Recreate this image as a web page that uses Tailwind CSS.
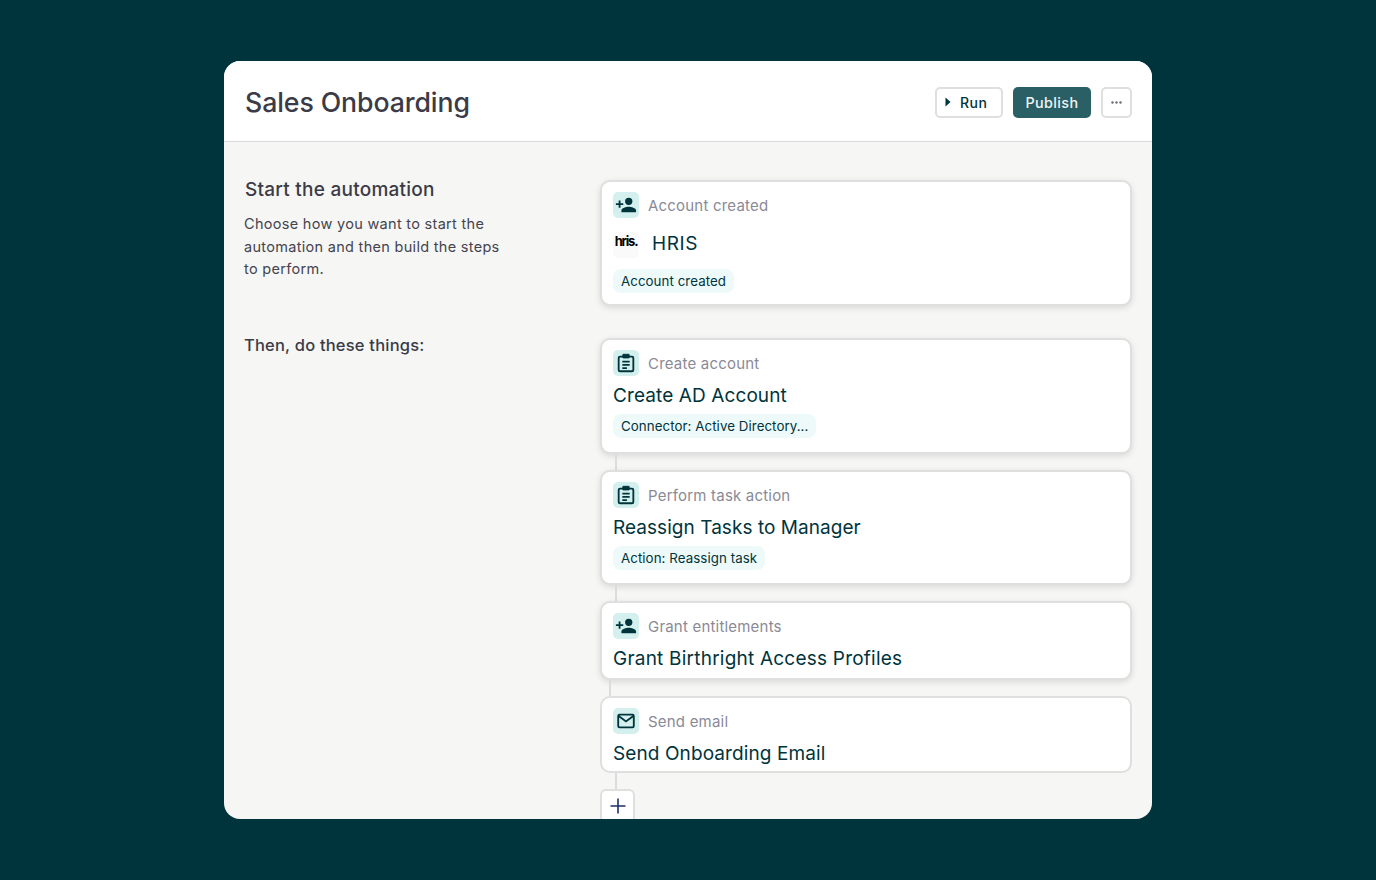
<!DOCTYPE html>
<html lang="en">
<head>
  <meta charset="UTF-8" />
  <title>Sales Onboarding</title>
  <script src="https://cdn.jsdelivr.net/npm/@tailwindcss/browser@4"></script>
</head>
<body class="bg-[#00343c] h-[880px] overflow-hidden font-['Inter',sans-serif]">
  <div class="pt-[61px] pl-[224px]">
    <div class="w-[928px] h-[758px] rounded-[16px] overflow-hidden bg-[#f6f6f4] flex flex-col">

      <!-- Header -->
      <header class="h-[81px] shrink-0 bg-white border-b border-[#d9d9de] flex items-center justify-between pl-[21px] pr-[20px] pt-[2px]">
        <h1 class="text-[26.7px] font-medium text-[#3b3b47] tracking-[-0.1px]">Sales Onboarding</h1>
        <div class="flex items-center">
          <button class="w-[68px] h-[31px] rounded-[5px] border-2 border-[#dfdfdf] bg-white flex items-center pl-[8px] text-[14px] font-medium text-[#00343c] tracking-[0.5px]">
            <svg class="w-[6px] h-[10px] mr-[9px]" viewBox="0 0 6 10"><path d="M0.5 0.5 5.5 5 0.5 9.5z" fill="#00343c"/></svg>
            Run
          </button>
          <button class="ml-[10px] w-[78px] h-[31px] pt-px rounded-[5px] bg-[#2a5f66] text-[14.3px] font-medium text-[#f0f5f5] tracking-[0.4px]">Publish</button>
          <button class="ml-[10px] w-[31px] h-[31px] rounded-[5px] border-2 border-[#dfdfdf] bg-white flex items-center justify-center">
            <svg class="w-[11px] h-[3px]" viewBox="0 0 11 3" fill="#6b6b7a"><circle cx="1.5" cy="1.5" r="1.2"/><circle cx="5.5" cy="1.5" r="1.2"/><circle cx="9.5" cy="1.5" r="1.2"/></svg>
          </button>
        </div>
      </header>

      <!-- Body -->
      <div class="flex flex-1 min-h-0 pl-[20px]">
        <div class="w-[357px] shrink-0">
          <h2 class="mt-[36px] text-[19px] leading-[24px] font-medium text-[#3b3b47] pl-px tracking-[0.25px]">Start the automation</h2>
          <p class="mt-[11px] text-[14.5px] leading-[22.5px] text-[#44444f] w-[270px] tracking-[0.3px]">Choose how you want to start the automation and then build the steps to perform.</p>
          <p class="mt-[53px] text-[16.5px] leading-[22px] font-medium text-[#3b3b47] tracking-[0.2px]">Then, do these things:</p>
        </div>

        <div class="w-[531px] pt-[38px] -ml-px">
          <!-- Trigger -->
          <section class="w-[532px] h-[126px] rounded-[10px] border-2 border-[#dfdfdf] bg-white shadow-[0_2px_6px_rgba(0,0,0,0.12)] pl-[11px] pt-[10px]">
            <div class="flex items-center h-[26px]">
              <span class="w-[26px] h-[26px] rounded-[5px] bg-[#d3f0ee] flex items-center justify-center">
                <svg class="w-[22px] h-[22px]" viewBox="0 0 24 24" fill="#00343c"><path d="M15 12a4 4 0 1 0 0-8 4 4 0 0 0 0 8zm-9-2V7H4v3H1v2h3v3h2v-3h3v-2H6zm9 4c-2.7 0-8 1.3-8 4v2h16v-2c0-2.700-5.300-4-8-4z"/></svg>
              </span>
              <span class="ml-[9px] pt-[2px] text-[15px] text-[#8a8a96] tracking-[0.2px]">Account created</span>
            </div>
            <div class="flex items-center h-[27px] mt-[13px]">
              <span class="w-[26px] h-[26px] pb-[6px] rounded-[5px] bg-[#fafafa] flex items-center justify-center text-[13px] font-bold tracking-[-1.2px] text-black">hris.</span>
              <span class="ml-[13px] text-[19px] text-[#00343c] tracking-[0.6px]">HRIS</span>
            </div>
            <span class="inline-block mt-[11px] h-[24px] leading-[24px] px-[8px] rounded-[8px] bg-[#eefafa] text-[13.3px] text-[#00343c] tracking-[0.07px]">Account created</span>
          </section>

          <!-- Steps -->
          <section class="w-[532px] mt-[32px] h-[116px] rounded-[10px] border-2 border-[#dfdfdf] bg-white shadow-[0_2px_6px_rgba(0,0,0,0.12)] pl-[11px] pt-[10px]">
            <div class="flex items-center h-[26px]">
              <span class="w-[26px] h-[26px] rounded-[5px] bg-[#d3f0ee] flex items-center justify-center">
                <svg class="w-[22px] h-[22px]" viewBox="0 0 24 24" fill="none" stroke="#00343c" stroke-width="2"><rect x="4" y="5" width="16" height="16" rx="1.500"/><rect x="8.500" y="2.500" width="7" height="4" rx=".5" fill="#00343c" stroke-width="1"/><path d="M8 10.500h8M8 14h8M8 17.500h5"/></svg>
              </span>
              <span class="ml-[9px] pt-[2px] text-[15px] text-[#8a8a96] tracking-[0.2px]">Create account</span>
            </div>
            <h3 class="mt-[7px] text-[19px] leading-[26px] font-normal text-[#00343c] tracking-[0.1px]">Create AD Account</h3>
            <span class="inline-block mt-[5px] h-[24px] leading-[24px] px-[8px] rounded-[8px] bg-[#eefafa] text-[13.3px] text-[#00343c] tracking-[0.07px]">Connector: Active Directory...</span>
          </section>
          <div class="w-[2px] h-[16px] ml-[15px] bg-[#dcdcdc]"></div>

          <section class="w-[532px] h-[115px] rounded-[10px] border-2 border-[#dfdfdf] bg-white shadow-[0_2px_6px_rgba(0,0,0,0.12)] pl-[11px] pt-[10px]">
            <div class="flex items-center h-[26px]">
              <span class="w-[26px] h-[26px] rounded-[5px] bg-[#d3f0ee] flex items-center justify-center">
                <svg class="w-[22px] h-[22px]" viewBox="0 0 24 24" fill="none" stroke="#00343c" stroke-width="2"><rect x="4" y="5" width="16" height="16" rx="1.500"/><rect x="8.500" y="2.500" width="7" height="4" rx=".5" fill="#00343c" stroke-width="1"/><path d="M8 10.500h8M8 14h8M8 17.500h5"/></svg>
              </span>
              <span class="ml-[9px] pt-[2px] text-[15px] text-[#8a8a96] tracking-[0.2px]">Perform task action</span>
            </div>
            <h3 class="mt-[7px] text-[19px] leading-[26px] font-normal text-[#00343c] tracking-[0.05px]">Reassign Tasks to Manager</h3>
            <span class="inline-block mt-[5px] h-[24px] leading-[24px] px-[8px] rounded-[8px] bg-[#eefafa] text-[13.3px] text-[#00343c] tracking-[0.07px]">Action: Reassign task</span>
          </section>
          <div class="w-[2px] h-[16px] ml-[15px] bg-[#dcdcdc]"></div>

          <section class="w-[532px] h-[79px] rounded-[10px] border-2 border-[#dfdfdf] bg-white shadow-[0_2px_6px_rgba(0,0,0,0.12)] pl-[11px] pt-[10px]">
            <div class="flex items-center h-[26px]">
              <span class="w-[26px] h-[26px] rounded-[5px] bg-[#d3f0ee] flex items-center justify-center">
                <svg class="w-[22px] h-[22px]" viewBox="0 0 24 24" fill="#00343c"><path d="M15 12a4 4 0 1 0 0-8 4 4 0 0 0 0 8zm-9-2V7H4v3H1v2h3v3h2v-3h3v-2H6zm9 4c-2.7 0-8 1.3-8 4v2h16v-2c0-2.700-5.300-4-8-4z"/></svg>
              </span>
              <span class="ml-[9px] pt-[2px] text-[15px] text-[#8a8a96] tracking-[0.2px]">Grant entitlements</span>
            </div>
            <h3 class="mt-[7px] text-[19px] leading-[26px] font-normal text-[#00343c] tracking-[0.22px]">Grant Birthright Access Profiles</h3>
          </section>
          <div class="w-[2px] h-[16px] ml-[9px] bg-[#dcdcdc]"></div>

          <section class="w-[532px] h-[77px] rounded-[10px] border-2 border-[#dfdfdf] bg-white pl-[11px] pt-[10px]">
            <div class="flex items-center h-[26px]">
              <span class="w-[26px] h-[26px] rounded-[5px] bg-[#d3f0ee] flex items-center justify-center">
                <svg class="w-[22px] h-[22px]" viewBox="0 0 24 24" fill="none" stroke="#00343c" stroke-width="2"><rect x="3.500" y="5" width="17" height="14" rx="1.500"/><path d="M4 6.500l8 6 8-6"/></svg>
              </span>
              <span class="ml-[9px] pt-[2px] text-[15px] text-[#8a8a96] tracking-[0.2px]">Send email</span>
            </div>
            <h3 class="mt-[7px] text-[19px] leading-[26px] font-normal text-[#00343c] tracking-[0.1px]">Send Onboarding Email</h3>
          </section>
          <div class="w-[2px] h-[16px] ml-[15px] bg-[#dcdcdc]"></div>

          <button class="w-[35px] h-[34px] rounded-[6px] border-2 border-[#dfdfdf] bg-white flex items-center justify-center">
            <svg class="w-[16px] h-[16px]" viewBox="0 0 16 16" stroke="#1f2f66" stroke-width="1.600"><path d="M8 0.500v15M0.500 8h15"/></svg>
          </button>
        </div>
      </div>
    </div>
  </div>
</body>
</html>
